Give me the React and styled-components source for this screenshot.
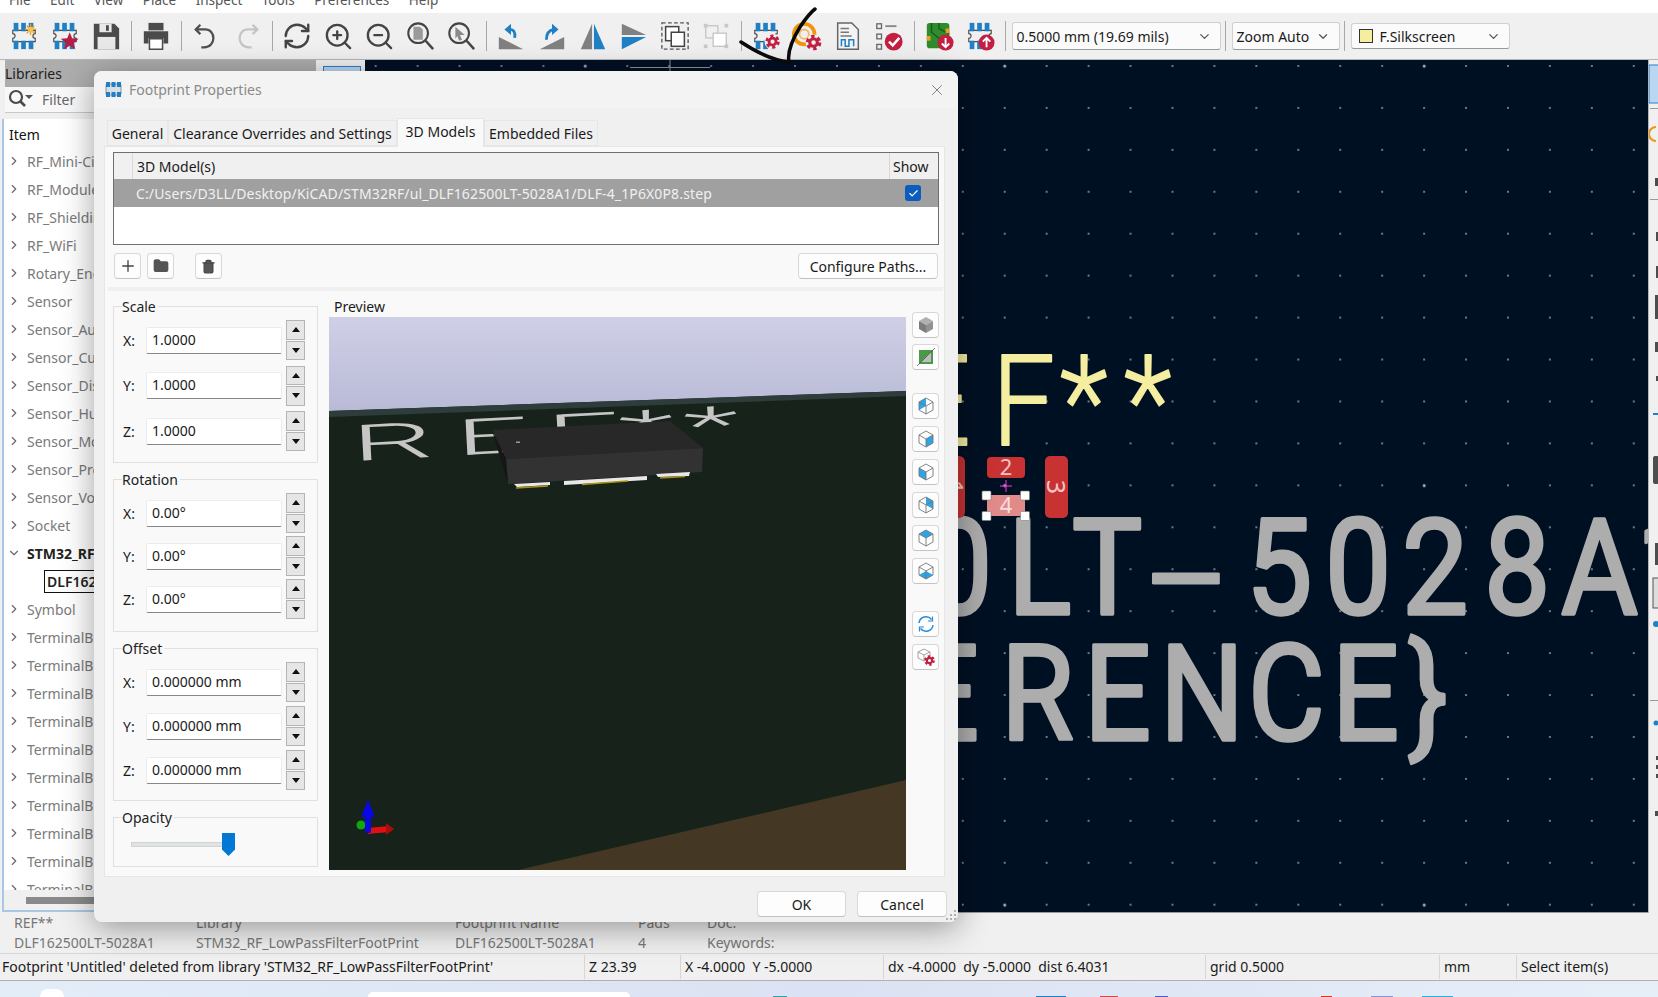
import React from 'react';
import styled, { createGlobalStyle } from 'styled-components';
import { ZoomIn, ZoomOut, RefreshCw, ChevronRight, ChevronDown, Plus, Folder, Trash2, Check, X } from 'lucide-react';

const GlobalStyle = createGlobalStyle`
    html, body {
        margin: 0;
        padding: 0;
        overflow: hidden;
        background: #f0f0f0;
    }
    * {
        box-sizing: border-box;
    }
`;

const UI_FONT = `"Noto Sans", "Open Sans", "Liberation Sans", sans-serif`;

const Page = styled.div`
    position: relative;
    width: 1658px;
    height: 997px;
    overflow: hidden;
    display: flex;
    flex-direction: column;
    background: #f0f0f0;
    font-family: ${UI_FONT};
    font-size: 14px;
    color: #1a1a1a;
`;

/* ---------- menu + top toolbar ---------- */

const MenuBar = styled.div`
    height: 13px;
    flex: none;
    background: #ffffff;
    overflow: hidden;
    display: flex;
    padding-left: 9px;
    gap: 19.5px;
`;

const MenuItem = styled.span`
    margin-top: -10px;
    line-height: 20px;
    font-size: 13.5px;
    color: #555;
`;

const Toolbar = styled.div`
    height: 47px;
    flex: none;
    display: flex;
    align-items: center;
    padding-left: 3.5px;
    background: #f0f0f0;
    border-bottom: 1px solid #b5b5b5;
`;

const ToolButton = styled.div`
    width: 41px;
    height: 34px;
    flex: none;
    display: flex;
    align-items: center;
    justify-content: center;
`;

const ToolSep = styled.div`
    width: 1px;
    height: 30px;
    flex: none;
    margin: 0 4px;
    background: #a8a8a8;
`;

const Combo = styled.div`
    width: ${(p) => p.$w}px;
    height: ${(p) => p.$h || 28}px;
    flex: none;
    margin-left: 2px;
    padding: 0 8px 0 4px;
    display: flex;
    align-items: center;
    gap: 7px;
    background: #fbfbfb;
    border: 1px solid #d0d0d0;
    border-bottom-color: #9a9a9a;
    border-radius: 3px;
    font-size: 14px;
    white-space: nowrap;
    & > svg {
        margin-left: auto;
        color: #555;
    }
`;

const Swatch = styled.span`
    width: 14px;
    height: 14px;
    margin-left: 3px;
    flex: none;
    background: #f5eda0;
    border: 1px solid #333;
`;

/* ---------- main area ---------- */

const Main = styled.div`
    height: 853px;
    flex: none;
    display: flex;
`;

const LeftPanel = styled.div`
    width: 316px;
    flex: none;
    display: flex;
    flex-direction: column;
    padding-left: 2px;
    overflow: hidden;
`;

const PanelHeader = styled.div`
    height: 27px;
    flex: none;
    margin-left: 3px;
    padding-left: 0;
    display: flex;
    align-items: center;
    background: #adadad;
    color: #1e1e1e;
`;

const FilterRow = styled.div`
    height: 26px;
    flex: none;
    margin-left: 3px;
    padding-left: 1px;
    display: flex;
    align-items: center;
    gap: 8px;
    background: #f8f8f8;
    border-bottom: 1px solid #c8c8c8;
    color: #666;
`;

const Tree = styled.div`
    height: 771px;
    flex: none;
    margin-top: 6px;
    background: #ffffff;
    border-left: 2px solid #a9c6e4;
    overflow: hidden;
`;

const TreeHead = styled.div`
    height: 28px;
    padding: 3px 0 0 5px;
    display: flex;
    align-items: center;
    color: #111;
`;

const TreeRow = styled.div`
    height: 28px;
    display: flex;
    align-items: center;
    padding-left: ${(p) => (p.$child ? 40 : 3)}px;
    gap: 6px;
    white-space: nowrap;
    color: ${(p) => (p.$bold || p.$child ? '#222' : '#7a7a7a')};
    font-weight: ${(p) => (p.$bold ? 700 : 400)};
    & > svg {
        flex: none;
        color: #6a6a6a;
    }
`;

const TreeSelected = styled.span`
    border: 1px solid #111;
    padding: 0 60px 0 2px;
    line-height: 21px;
    font-weight: 600;
`;

const HScroll = styled.div`
    height: 22px;
    flex: none;
    display: flex;
    align-items: center;
    padding-left: 22px;
    border-left: 2px solid #a9c6e4;
    border-bottom: 2px solid #a9c6e4;
`;

const HThumb = styled.div`
    width: 200px;
    height: 7px;
    background: #8a8a8a;
`;

const LeftTools = styled.div`
    width: 49px;
    flex: none;
    padding: 6px 4px 0 7px;
`;

const ToolSelected = styled.div`
    width: 38px;
    height: 38px;
    background: #b9d6f2;
    border: 1px solid #2b7fd0;
`;

const Canvas = styled.div`
    position: relative;
    width: 1283px;
    flex: none;
    overflow: hidden;
    background-color: #001023;
    background-image:
        radial-gradient(circle, #a7aeb6 0 1.3px, transparent 1.7px),
        radial-gradient(circle, #939ca6 0 0.6px, transparent 1px);
    background-size: 419.5px 419.5px, 41.95px 41.95px;
    background-position: 430px 216px, -10.3px -15px;
    border-bottom: 1px solid #9a9a9a;
`;

const CanvasArt = styled.svg`
    position: absolute;
    left: 0;
    top: 0;
    width: 1283px;
    height: 853px;
`;

const RightTools = styled.div`
    flex: 1;
    min-width: 0;
    overflow: hidden;
    border-left: 1px solid #b5b5b5;
`;

/* ---------- bottom panels ---------- */

const MsgPanel = styled.div`
    height: 40px;
    flex: none;
    display: flex;
    padding-left: 14px;
    color: #777;
`;

const MsgCol = styled.div`
    width: ${(p) => p.$w}px;
    flex: none;
    line-height: 20px;
    white-space: nowrap;
`;

const StatusBar = styled.div`
    height: 28px;
    flex: none;
    display: flex;
    align-items: center;
    border-top: 1px solid #d6d6d6;
    border-bottom: 1px solid #b0b0b0;
    white-space: nowrap;
`;

const StatusCell = styled.div`
    width: ${(p) => p.$w}px;
    flex: none;
    height: 24px;
    line-height: 24px;
    padding-left: ${(p) => p.$pl || 4}px;
    overflow: hidden;
    border-right: 1px solid #d6d6d6;
    &:last-child {
        border-right: 0;
    }
`;

const Taskbar = styled.div`
    flex: 1;
    display: flex;
    align-items: flex-end;
    overflow: hidden;
    background: linear-gradient(90deg, #e3edf8, #dbe2f3 50%, #e6eff8);
`;

const TaskPiece = styled.div`
    width: ${(p) => p.$w}px;
    height: ${(p) => p.$h}px;
    margin-left: ${(p) => p.$ml}px;
    flex: none;
    background: ${(p) => p.$c};
    border-radius: ${(p) => p.$r || 0}px ${(p) => p.$r || 0}px 0 0;
`;

/* ---------- dialog ---------- */

const Dialog = styled.div`
    position: absolute;
    left: 94px;
    top: 71px;
    width: 864px;
    height: 851px;
    display: flex;
    flex-direction: column;
    border-radius: 8px;
    overflow: hidden;
    background: #f0f0f0;
    box-shadow: 0 6px 32px rgba(0, 0, 0, 0.38);
`;

const TitleBar = styled.div`
    height: 37px;
    flex: none;
    display: flex;
    align-items: center;
    gap: 7px;
    padding: 0 12px 0 11px;
    background: #f3f3f3;
    color: #8a8a8a;
    & > svg:last-child {
        margin-left: auto;
        color: #808080;
    }
`;

const DialogBody = styled.div`
    flex: 1;
    min-height: 0;
    display: flex;
    flex-direction: column;
    padding: 10px 13px 0 10px;
`;

const TabRow = styled.div`
    height: 28px;
    flex: none;
    display: flex;
    align-items: flex-end;
    padding-left: 3px;
`;

const Tab = styled.div`
    width: ${(p) => p.$w}px;
    height: ${(p) => (p.$active ? 29 : 26)}px;
    margin-bottom: ${(p) => (p.$active ? -1 : 0)}px;
    padding-bottom: ${(p) => (p.$active ? 3 : 0)}px;
    position: relative;
    flex: none;
    display: flex;
    align-items: center;
    justify-content: center;
    white-space: nowrap;
    background: ${(p) => (p.$active ? '#f9f9f9' : '#f0f0f0')};
    border: 1px solid #e6e6e6;
    border-bottom: ${(p) => (p.$active ? 0 : '1px solid #e6e6e6')};
`;

const TabPanel = styled.div`
    height: 731px;
    flex: none;
    display: flex;
    flex-direction: column;
    padding: 5px 5px 0 8px;
    background: #f9f9f9;
    border: 1px solid #e6e6e6;
`;

const Grid = styled.div`
    height: 93px;
    flex: none;
    background: #ffffff;
    border: 1px solid #6e6e6e;
`;

const GridHead = styled.div`
    height: 26px;
    display: flex;
    background: #f0f0f0;
`;

const GridCorner = styled.div`
    width: 19px;
    flex: none;
    border-right: 1px solid #d8d8d8;
`;

const GridTitle = styled.div`
    flex: 1;
    padding-left: 4px;
    line-height: 27px;
`;

const GridShow = styled.div`
    width: 49px;
    flex: none;
    padding-left: 3px;
    line-height: 27px;
    border-left: 1px solid #d8d8d8;
`;

const GridRow = styled.div`
    height: 28px;
    display: flex;
    align-items: center;
    background: #a0a0a0;
    color: #f0f0f0;
`;

const GridPath = styled.div`
    flex: 1;
    padding-left: 22px;
    white-space: nowrap;
    letter-spacing: 0.13px;
`;

const CheckBox = styled.div`
    width: 16px;
    height: 16px;
    margin-right: 17px;
    display: flex;
    align-items: center;
    justify-content: center;
    border-radius: 3px;
    background: #0b5cbd;
    color: #fff;
`;

const GridTools = styled.div`
    height: 26px;
    flex: none;
    margin-top: 8px;
    display: flex;
    align-items: center;
    justify-content: space-between;
    padding-left: 1px;
`;

const GridToolSet = styled.div`
    display: flex;
    align-items: center;
`;

const IconButton = styled.div`
    width: 27px;
    height: 26px;
    flex: none;
    margin-left: ${(p) => p.$ml || 0}px;
    margin-top: ${(p) => p.$mt || 0}px;
    display: flex;
    align-items: center;
    justify-content: center;
    background: #fdfdfd;
    border: 1px solid #d8d8d8;
    border-bottom-color: #c4c4c4;
    border-radius: 4px;
    color: #444;
`;

const Button = styled.div`
    width: ${(p) => p.$w}px;
    height: ${(p) => p.$h || 26}px;
    flex: none;
    margin-left: ${(p) => p.$ml || 0}px;
    margin-right: ${(p) => p.$mr || 0}px;
    display: flex;
    align-items: center;
    justify-content: center;
    background: #fdfdfd;
    border: 1px solid #d8d8d8;
    border-bottom-color: #c0c0c0;
    border-radius: 4px;
    white-space: nowrap;
`;

const SplitLine = styled.div`
    height: 4px;
    flex: none;
    margin: 8px -4px 0 -5px;
    background: #f0f0f0;
`;

const Columns = styled.div`
    flex: 1;
    min-height: 0;
    margin-top: 7px;
    display: flex;
`;

const FormCol = styled.div`
    width: 205px;
    flex: none;
    padding-top: 8px;
    display: flex;
    flex-direction: column;
    gap: 16px;
`;

const Group = styled.div`
    height: ${(p) => p.$h}px;
    flex: none;
    padding: 0 12px 0 9px;
    border: 1px solid #e0e0e0;
`;

const GroupTitle = styled.div`
    width: fit-content;
    height: 13px;
    margin: -10px 0 0 -1px;
    padding: 0 2px 0 0;
    line-height: 19px;
    background: linear-gradient(transparent 9px, #f9f9f9 9px);
    color: #222;
`;

const GroupRows = styled.div`
    padding-top: 10px;
    display: flex;
    flex-direction: column;
    gap: ${(p) => p.$gap}px;
`;

const Row = styled.div`
    height: 40px;
    display: flex;
    align-items: center;
`;

const RowLabel = styled.div`
    width: 23px;
    flex: none;
`;

const TextInput = styled.div`
    width: 136px;
    height: 27px;
    flex: none;
    padding-left: 5px;
    line-height: 24px;
    background: #ffffff;
    border: 1px solid #ececec;
    border-bottom: 1px solid #888;
    border-radius: 2px;
`;

const Spinner = styled.div`
    width: 19px;
    height: 40px;
    margin-left: 4px;
    flex: none;
    display: flex;
    flex-direction: column;
    gap: 1px;
`;

const SpinButton = styled.div`
    flex: 1;
    display: flex;
    align-items: center;
    justify-content: center;
    background: #e6e6e6;
    border: 1px solid #b4b4b4;
`;

const Arrow = styled.span`
    width: 0;
    height: 0;
    border-left: 4px solid transparent;
    border-right: 4px solid transparent;
    ${(p) => (p.$up ? 'border-bottom: 5px solid #111;' : 'border-top: 5px solid #111;')}
`;

const SliderWrap = styled.div`
    position: relative;
    height: 30px;
    margin: 12px 0 0 8px;
`;

const SliderTrack = styled.div`
    width: 104px;
    height: 5px;
    margin-top: 9px;
    position: absolute;
    background: #e0e3e3;
    border: 1px solid #d2d4d4;
`;

const SliderThumb = styled.div`
    position: absolute;
    left: 91px;
    top: 0;
    width: 13px;
    height: 23px;
    background: #0078d4;
    clip-path: polygon(0 0, 100% 0, 100% 72%, 50% 100%, 0 72%);
`;

const PreviewCol = styled.div`
    width: 577px;
    flex: none;
    margin-left: 11px;
    display: flex;
    flex-direction: column;
`;

const PreviewLabel = styled.div`
    height: 19px;
    flex: none;
    padding-left: 5px;
    line-height: 18px;
`;

const PreviewArt = styled.svg`
    display: block;
    width: 577px;
    height: 553px;
    flex: none;
`;

const PreviewTools = styled.div`
    flex: none;
    margin-left: 6px;
    padding-top: 14px;
    display: flex;
    flex-direction: column;
`;

const DialogFooter = styled.div`
    flex: 1;
    position: relative;
    display: flex;
    align-items: flex-start;
    justify-content: flex-end;
    padding-top: 14px;
`;

const Grip = styled.svg`
    position: absolute;
    right: -13px;
    bottom: 0;
    width: 12px;
    height: 12px;
`;

const Scribble = styled.svg`
    position: absolute;
    left: 730px;
    top: 0;
    width: 100px;
    height: 70px;
    pointer-events: none;
`;

/* ---------- drawn icons ---------- */

const Svg = ({ size = 30, vb = 32, children }) => (
    <svg width={size} height={size} viewBox={`0 0 ${vb} ${vb}`}>{children}</svg>
);

const Gear = ({ x, y, r = 6, c = '#c21f43' }) => (
    <g>
        <circle cx={x} cy={y} r={r} fill="none" stroke={c} strokeWidth={r * 0.55} strokeDasharray={`${r * 0.55} ${r * 0.5}`} />
        <circle cx={x} cy={y} r={r * 0.62} fill="none" stroke={c} strokeWidth={r * 0.5} />
    </g>
);

const FootprintArt = () => (
    <g>
        <path d="M4 10H28V13.5A2.5 2.5 0 0 0 28 18.5V22H4V18.5A2.5 2.5 0 0 0 4 13.5Z" fill="none" stroke="#4a4a4a" strokeWidth="1.2" />
        <g fill="#1f80c6">
            <rect x="5" y="2" width="5" height="9" />
            <rect x="13" y="2" width="5" height="9" />
            <rect x="21" y="2" width="5" height="9" />
            <rect x="5" y="21" width="5" height="9" />
            <rect x="13" y="21" width="5" height="9" />
            <rect x="21" y="21" width="5" height="9" />
        </g>
    </g>
);

const ArrowBadge = ({ up }) => (
    <g>
        <circle cx="23" cy="23" r="8.5" fill="#c21f43" />
        <path d={up ? 'M23 28V18M19 22L23 18L27 22' : 'M23 18V28M19 24L23 28L27 24'} stroke="#fff" strokeWidth="2" fill="none" />
    </g>
);

const icons = {
    fpSun: (
        <Svg>
            <FootprintArt />
            <g stroke="#f0a020" strokeWidth="1.4">
                <path d="M23 3V15M17 9H29M19 5L27 13M27 5L19 13" />
            </g>
            <circle cx="23" cy="9" r="3" fill="#f8c050" />
        </Svg>
    ),
    fpStar: (
        <Svg>
            <FootprintArt />
            <path d="M21 12L23.6 18.5L30.5 19L25.2 23.4L27 30.2L21 26.5L15 30.2L16.8 23.4L11.5 19L18.4 18.5Z" fill="#b51d42" />
        </Svg>
    ),
    save: (
        <Svg>
            <path d="M3 3H25L30 8V30H3Z" fill="#4b4b4b" />
            <rect x="9" y="3" width="13" height="9" fill="#e8e8e8" />
            <rect x="16" y="4.5" width="3" height="6" fill="#4b4b4b" />
            <rect x="7" y="17" width="19" height="13" fill="#e8e8e8" />
        </Svg>
    ),
    print: (
        <Svg>
            <rect x="8" y="2" width="16" height="8" fill="#4b4b4b" />
            <path d="M3 11H29V24H24V18H8V24H3Z" fill="#4b4b4b" />
            <path d="M9 19H23V30H9Z" fill="#fff" stroke="#4b4b4b" strokeWidth="1.6" />
        </Svg>
    ),
    undo: (
        <Svg>
            <path d="M10 4L5 9L10 14M5 9H15C27 9 27 28 14 28H11" fill="none" stroke="#4f4f4f" strokeWidth="2.4" />
        </Svg>
    ),
    redo: (
        <Svg>
            <path d="M22 4L27 9L22 14M27 9H17C5 9 5 28 18 28H21" fill="none" stroke="#c4c4c4" strokeWidth="2.4" />
        </Svg>
    ),
    refresh: <RefreshCw size={30} color="#444" strokeWidth={1.9} />,
    zoomIn: <ZoomIn size={31} color="#444" strokeWidth={1.8} />,
    zoomOut: <ZoomOut size={31} color="#444" strokeWidth={1.8} />,
    zoomFit: (
        <Svg>
            <circle cx="14" cy="13" r="10.5" fill="none" stroke="#444" strokeWidth="2.2" />
            <path d="M22 21L30 30" stroke="#444" strokeWidth="2.6" />
            <path d="M9 6H16L19 9V20H9Z" fill="#9a9a9a" />
        </Svg>
    ),
    zoomObj: (
        <Svg>
            <circle cx="14" cy="13" r="10.5" fill="none" stroke="#444" strokeWidth="2.2" />
            <path d="M22 21L30 30" stroke="#444" strokeWidth="2.6" />
            <path d="M10 6L20 15H15L17 20L14 21L12 16L10 19Z" fill="#8a8a8a" />
        </Svg>
    ),
    rotL: (
        <Svg>
            <path d="M3 30L29 30V17Z" transform="scale(-1 1) translate(-32 0)" fill="#808080" />
            <path d="M20 18C21 12 19 9 14 9" fill="none" stroke="#1f80c6" strokeWidth="3" />
            <path d="M16 3L9 9L16 15Z" fill="#1f80c6" />
        </Svg>
    ),
    rotR: (
        <Svg>
            <path d="M3 30L29 30V17Z" fill="#808080" />
            <path d="M10 20C10 14 12 10 18 9" fill="none" stroke="#1f80c6" strokeWidth="3" />
            <path d="M16 3L23 9L16 15Z" fill="#1f80c6" />
        </Svg>
    ),
    mirH: (
        <Svg>
            <path d="M15 3V30H3Z" fill="#808080" />
            <path d="M17 3V30H29Z" fill="#1f80c6" />
        </Svg>
    ),
    mirV: (
        <Svg>
            <path d="M3 3L29 15H3Z" fill="#808080" />
            <path d="M3 17L29 17L3 30Z" fill="#1f80c6" />
        </Svg>
    ),
    group: (
        <Svg>
            <rect x="2" y="2" width="28" height="28" fill="none" stroke="#555" strokeWidth="1.4" strokeDasharray="4 2.5" />
            <rect x="6" y="6" width="14" height="15" fill="#fff" stroke="#444" strokeWidth="1.6" />
            <rect x="12" y="12" width="14" height="15" fill="#fff" stroke="#444" strokeWidth="1.6" />
        </Svg>
    ),
    ungroup: (
        <Svg>
            <rect x="5" y="5" width="13" height="13" fill="none" stroke="#c8c8c8" strokeWidth="1.5" />
            <rect x="13" y="13" width="14" height="14" fill="#fff" stroke="#c8c8c8" strokeWidth="1.5" />
            <rect x="3" y="3" width="4" height="4" fill="#c8c8c8" />
            <rect x="25" y="3" width="4" height="4" fill="#c8c8c8" />
            <rect x="3" y="25" width="4" height="4" fill="#c8c8c8" />
            <rect x="25" y="25" width="4" height="4" fill="#c8c8c8" />
        </Svg>
    ),
    fpGear: (
        <Svg>
            <FootprintArt />
            <circle cx="23" cy="22" r="8.5" fill="#f0f0f0" />
            <Gear x={23} y={22} r={6} />
        </Svg>
    ),
    ringGear: (
        <Svg>
            <circle cx="13" cy="14" r="11" fill="none" stroke="#f0960e" strokeWidth="4" />
            <circle cx="13" cy="14" r="5" fill="none" stroke="#f5b860" strokeWidth="2" />
            <circle cx="23" cy="23" r="8.5" fill="#f0f0f0" />
            <Gear x={23} y={23} r={6.5} />
        </Svg>
    ),
    sheet: (
        <Svg>
            <path d="M5 2H20L27 9V30H5Z" fill="#f4f4f4" stroke="#666" strokeWidth="1.6" />
            <path d="M8 8H17M8 12H17M8 16H20" stroke="#777" strokeWidth="1.4" />
            <path d="M9 27V20H13V27H17V20H22V27" fill="none" stroke="#1f80c6" strokeWidth="1.6" />
        </Svg>
    ),
    checks: (
        <Svg>
            <g fill="none" stroke="#666" strokeWidth="1.4">
                <rect x="3" y="3" width="5" height="5" />
                <rect x="3" y="14" width="5" height="5" />
                <rect x="3" y="25" width="5" height="5" />
            </g>
            <path d="M12 5.5H24" stroke="#888" strokeWidth="2" />
            <circle cx="21" cy="22" r="9.5" fill="#c21f43" />
            <path d="M16 22L20 26L27 18" fill="none" stroke="#fff" strokeWidth="2.6" />
        </Svg>
    ),
    pcbDown: (
        <Svg>
            <rect x="3" y="2" width="24" height="27" rx="3" fill="#2e8b2e" />
            <path d="M8 2V12L18 20M16 2V8L27 14" fill="none" stroke="#185c18" strokeWidth="1.5" />
            <rect x="23" y="8" width="4" height="5" fill="#e8a020" />
            <rect x="3" y="16" width="4" height="5" fill="#e8a020" />
            <ArrowBadge />
        </Svg>
    ),
    fpUp: (
        <Svg>
            <FootprintArt />
            <ArrowBadge up />
        </Svg>
    ),
};

const Cube = ({ face }) => {
    const faces = {
        a: '3,6 10,2 10,10 3,14',
        b: '10,10 17,6 17,14 10,18',
        c: '3,6 10,10 10,18 3,14',
        d: '10,2 17,6 17,14 10,10',
        e: '3,6 10,2 17,6 10,10',
        f: '3,14 10,10 17,14 10,18',
    };
    return (
        <Svg size={20} vb={20}>
            <polygon points={faces[face]} fill="#2ba4e8" />
            <path d="M10 2L17 6V14L10 18L3 14V6ZM3 6L10 10L17 6M10 10V18" fill="none" stroke="#777" strokeWidth="0.9" />
        </Svg>
    );
};

const SolidCube = () => (
    <Svg size={20} vb={20}>
        <polygon points="10,2 17,6 10,10 3,6" fill="#b0b0b0" />
        <polygon points="3,6 10,10 10,18 3,14" fill="#7c7c7c" />
        <polygon points="17,6 10,10 10,18 17,14" fill="#929292" />
    </Svg>
);

const BoardIcon = () => (
    <Svg size={20} vb={20}>
        <rect x="3" y="3" width="14" height="14" fill="#4a9a4a" />
        <polygon points="5,15 15,5 15,15" fill="#bdbdbd" />
        <path d="M1 19L19 1" stroke="#555" strokeWidth="0.8" />
    </Svg>
);

const ReloadIcon = () => (
    <Svg size={20} vb={20}>
        <path d="M3 9A7 7 0 0 1 15.5 5.5M17 11A7 7 0 0 1 4.5 14.5" fill="none" stroke="#2a8ad6" strokeWidth="1.5" />
        <path d="M16.5 2.5V7H12M3.5 17.5V13H8" fill="none" stroke="#2a8ad6" strokeWidth="1.2" />
    </Svg>
);

const SettingsCube = () => (
    <Svg size={20} vb={20}>
        <path d="M8 2L14 5V11L8 14L2 11V5ZM2 5L8 8L14 5M8 8V14" fill="none" stroke="#999" strokeWidth="0.9" />
        <Gear x={13.5} y={13.5} r={4.2} />
    </Svg>
);

const FootprintTitleIcon = () => (
    <Svg size={17} vb={17}>
        <rect x="1" y="3" width="15" height="11" rx="1" fill="#d6dfe6" stroke="#555" strokeWidth="0.6" />
        <g fill="#1f80c6">
            <rect x="1" y="1" width="4" height="5" />
            <rect x="6.5" y="1" width="4" height="5" />
            <rect x="12" y="1" width="4" height="5" />
            <rect x="1" y="11" width="4" height="5" />
            <rect x="6.5" y="11" width="4" height="5" />
            <rect x="12" y="11" width="4" height="5" />
        </g>
    </Svg>
);

const SearchIcon = () => (
    <Svg size={28} vb={28}>
        <circle cx="10" cy="11" r="6" fill="none" stroke="#4a4a4a" strokeWidth="2.2" />
        <path d="M14.5 15.5L19 20" stroke="#4a4a4a" strokeWidth="2.6" />
        <path d="M19 9H27L23 13Z" fill="#555" />
    </Svg>
);

/* ---------- page data ---------- */

const toolbarGroups = [
    ['fpSun', 'fpStar', 'save'],
    ['print'],
    ['undo', 'redo'],
    ['refresh', 'zoomIn', 'zoomOut', 'zoomFit', 'zoomObj'],
    ['rotL', 'rotR', 'mirH', 'mirV', 'group', 'ungroup'],
    ['fpGear', 'ringGear', 'sheet', 'checks'],
    ['pcbDown', 'fpUp'],
];

const libraries = [
    'RF_Mini-Circuits', 'RF_Module', 'RF_Shielding', 'RF_WiFi', 'Rotary_Encoder', 'Sensor', 'Sensor_Audio',
    'Sensor_Current', 'Sensor_Distance', 'Sensor_Humidity', 'Sensor_Motion', 'Sensor_Pressure', 'Sensor_Voltage', 'Socket',
];

const afterLibraries = ['Symbol', ...Array(9).fill('TerminalBlock'), 'TerminalBlock_Phoenix', 'TerminalBlock_RND'];

const spinGroups = [
    { title: 'Scale', h: 157, gap: 5.5, rows: [['X:', '1.0000'], ['Y:', '1.0000'], ['Z:', '1.0000']] },
    { title: 'Rotation', h: 153, gap: 3, rows: [['X:', '0.00°'], ['Y:', '0.00°'], ['Z:', '0.00°']] },
    { title: 'Offset', h: 153, gap: 4, rows: [['X:', '0.000000 mm'], ['Y:', '0.000000 mm'], ['Z:', '0.000000 mm']] },
];

const SILK = 'Roboto, "Liberation Sans", sans-serif';
const xs = (...v) => v.join(' ');

// silkscreen lettering is narrower than Roboto, so it sits in a condensed group
const NARROW = 0.88;
const nx = (...v) => v.map((n) => (n / NARROW).toFixed(1)).join(' ');

const silkGrey = {
    fontFamily: SILK,
    fontSize: 134,
    fill: '#adadad',
    stroke: '#adadad',
    strokeWidth: 3.5,
    strokeLinejoin: 'round',
};

// canvas drawing uses page coordinates, shifted by the canvas origin
const PcbDrawing = () => (
    <CanvasArt viewBox="365 60 1283 853">
        <path d="M630 67.5H710M670 60V72" stroke="#8a939c" strokeWidth="1" />
        <g transform={`scale(${NARROW} 1)`}>
            <text x={nx(820, 907, 992, 1060, 1124)} y="445" fontFamily={SILK} fontSize="127" fontWeight="300" fill="#f5eda0" stroke="#f5eda0" strokeWidth="1.8" strokeLinejoin="round">REF**</text>
            <text x={nx(225, 305, 385, 465, 545, 625, 705, 785, 926, 1008, 1072)} y="614" {...silkGrey}>DLF162500LT</text>
            <text x={nx(1246, 1325, 1402, 1484, 1561, 1636)} y="614" {...silkGrey}>5028A1</text>
            <text x={nx(380, 460, 560, 660, 760, 912, 1001, 1084, 1160, 1248, 1332, 1408)} y="740" {...silkGrey}>
                {'${REFERENCE}'}
            </text>
        </g>
        <text transform="translate(1149 619) scale(2 1)" {...silkGrey} strokeWidth="2">-</text>

        <rect x="920" y="456" width="45" height="62" rx="6" fill="#c83232" />
        <rect x="987" y="457" width="38" height="21" rx="4" fill="#c83232" />
        <rect x="1045" y="456" width="23" height="62" rx="5" fill="#c83232" />
        <rect x="987" y="495" width="38" height="21" fill="#e08a8a" />
        <text x="1006" y="475" textAnchor="middle" fontFamily={UI_FONT} fontSize="22" fill="#f3c4c4">2</text>
        <text x="1006" y="513" textAnchor="middle" fontFamily={UI_FONT} fontSize="22" fill="#f7dede">4</text>
        <text transform="translate(1047 487) rotate(90)" textAnchor="middle" fontFamily={UI_FONT} fontSize="25" fill="#f3c4c4">3</text>
        <text transform="translate(945 487) rotate(90)" textAnchor="middle" fontFamily={UI_FONT} fontSize="25" fill="#f3c4c4">1</text>
        <path d="M1000 486H1012M1006 480V492" stroke="#ff30e0" strokeWidth="1" />
        <g fill="#fff" stroke="#777" strokeWidth="0.6">
            <rect x="982" y="491" width="9" height="9" rx="1" />
            <rect x="1020.500" y="491" width="9" height="9" rx="1" />
            <rect x="982" y="511.500" width="9" height="9" rx="1" />
            <rect x="1020.500" y="511.500" width="9" height="9" rx="1" />
        </g>
    </CanvasArt>
);

// 3D viewer content, in page coordinates too
const ModelPreview = () => (
    <PreviewArt viewBox="329 317 577 553">
        <defs>
            <linearGradient id="sky" x1="0" y1="0" x2="0" y2="1">
                <stop offset="0" stopColor="#cfcfe6" />
                <stop offset="1" stopColor="#b9bad6" />
            </linearGradient>
        </defs>
        <rect x="329" y="317" width="577" height="553" fill="#17231a" />
        <polygon points="329,317 906,317 906,391 329,411" fill="url(#sky)" />
        <polygon points="329,411 906,391 906,396 329,417" fill="#2e3c3c" />
        <polygon points="518,870 906,780 906,870" fill="#443824" />
        <text
            transform="translate(352 461) rotate(-3) scale(2.6 1)"
            x={xs(0, 40, 75, 103, 128)}
            fontFamily={SILK}
            fontSize="50"
            fontWeight="300"
            fill="#c6c6c6"
        >
            REF**
        </text>
        <polygon points="492,430 670,421 703,448 506,459" fill="#282828" />
        <polygon points="506,459 703,448 702,472 508,484" fill="#323232" />
        <polygon points="492,430 506,459 508,484" fill="#161616" />
        <rect x="516" y="441.500" width="4" height="1.500" fill="#999" />
        <polygon points="514,484 550,482 550,485 517,487" fill="#e8e8e8" />
        <polygon points="564,481 647,476 647,480 564,485" fill="#e8e8e8" />
        <polygon points="656,474 690,472 689,476 658,477" fill="#e8e8e8" />
        <path d="M516 488L548 486M582 484.500L628 481M660 478L685 476.500" stroke="#a89015" strokeWidth="1.400" />
        <circle cx="361" cy="825" r="4.500" fill="#0ea80e" />
        <polygon points="368,828 389,826 394,829 389,832 368,834" fill="#e01010" />
        <polygon points="386,823 394,829 386,835" fill="#a80c0c" />
        <rect x="365" y="813" width="6" height="20" rx="2" fill="#0808e0" />
        <polygon points="368,800 375,817 361,817" fill="#0808e0" />
    </PreviewArt>
);

const Spin = () => (
    <Spinner>
        <SpinButton><Arrow $up /></SpinButton>
        <SpinButton><Arrow /></SpinButton>
    </Spinner>
);

const App = () => (
    <Page>
        <GlobalStyle />
        <MenuBar>
            {['File', 'Edit', 'View', 'Place', 'Inspect', 'Tools', 'Preferences', 'Help'].map((m) => (
                <MenuItem key={m}>{m}</MenuItem>
            ))}
        </MenuBar>
        <Toolbar>
            {toolbarGroups.map((group, i) => (
                <React.Fragment key={i}>
                    {i > 0 && <ToolSep />}
                    {group.map((name) => (
                        <ToolButton key={name}>{icons[name]}</ToolButton>
                    ))}
                </React.Fragment>
            ))}
            <ToolSep />
            <Combo $w={209}>0.5000 mm (19.69 mils)<ChevronDown size={15} /></Combo>
            <ToolSep />
            <Combo $w={108}>Zoom Auto<ChevronDown size={15} /></Combo>
            <ToolSep />
            <Combo $w={159} $h={26}><Swatch />F.Silkscreen<ChevronDown size={15} /></Combo>
        </Toolbar>

        <Main>
            <LeftPanel>
                <PanelHeader>Libraries</PanelHeader>
                <FilterRow><SearchIcon />Filter</FilterRow>
                <Tree>
                    <TreeHead>Item</TreeHead>
                    {libraries.map((name) => (
                        <TreeRow key={name}><ChevronRight size={14} />{name}</TreeRow>
                    ))}
                    <TreeRow $bold><ChevronDown size={14} />STM32_RF_LowPassFilterFootPrint</TreeRow>
                    <TreeRow $child><TreeSelected>DLF162500LT-5028A1</TreeSelected></TreeRow>
                    {afterLibraries.map((name, i) => (
                        <TreeRow key={i}><ChevronRight size={14} />{name}</TreeRow>
                    ))}
                </Tree>
                <HScroll><HThumb /></HScroll>
            </LeftPanel>
            <LeftTools><ToolSelected /></LeftTools>
            <Canvas><PcbDrawing /></Canvas>
            <RightTools>
                <svg width="10" height="853" viewBox="1649 60 10 853">
                    <rect x="1649" y="65" width="10" height="38" fill="#b9d6f2" stroke="#2b7fd0" />
                    <path d="M1650 108.500H1659M1650 199.500H1659M1650 700.500H1659" stroke="#999" />
                    <path d="M1656 127A7 7 0 0 0 1656 141" fill="none" stroke="#f0960e" strokeWidth="2" />
                    <g fill="#4d4d4d">
                        <rect x="1655" y="178" width="4" height="8" />
                        <rect x="1656" y="232" width="3" height="9" />
                        <rect x="1656" y="266" width="3" height="12" />
                        <rect x="1655" y="295" width="4" height="24" />
                        <rect x="1655" y="342" width="4" height="10" />
                        <rect x="1656" y="376" width="3" height="5" />
                        <rect x="1653" y="456" width="6" height="28" rx="2" />
                        <rect x="1655" y="543" width="4" height="22" />
                        <rect x="1656" y="765" width="3" height="4" />
                        <rect x="1656" y="756" width="3" height="4" />
                        <rect x="1656" y="774" width="3" height="4" />
                        <rect x="1655" y="811" width="4" height="5" />
                    </g>
                    <rect x="1653" y="413" width="6" height="2" fill="#1f80c6" />
                    <rect x="1653" y="578" width="6" height="30" fill="#ddd" stroke="#555" />
                    <circle cx="1656" cy="624" r="3" fill="#1f80c6" />
                    <circle cx="1656" cy="723" r="2.500" fill="#1f80c6" />
                </svg>
            </RightTools>
        </Main>

        <MsgPanel>
            <MsgCol $w={182}><div>REF**</div><div>DLF162500LT-5028A1</div></MsgCol>
            <MsgCol $w={259}><div>Library</div><div>STM32_RF_LowPassFilterFootPrint</div></MsgCol>
            <MsgCol $w={183}><div>Footprint Name</div><div>DLF162500LT-5028A1</div></MsgCol>
            <MsgCol $w={69}><div>Pads</div><div>4</div></MsgCol>
            <MsgCol $w={200}><div>Doc:</div><div>Keywords:</div></MsgCol>
        </MsgPanel>
        <StatusBar>
            <StatusCell $w={585} $pl={2}>Footprint 'Untitled' deleted from library 'STM32_RF_LowPassFilterFootPrint'</StatusCell>
            <StatusCell $w={96}>Z 23.39</StatusCell>
            <StatusCell $w={203}>X -4.0000&nbsp; Y -5.0000</StatusCell>
            <StatusCell $w={322}>dx -4.0000&nbsp; dy -5.0000&nbsp; dist 6.4031</StatusCell>
            <StatusCell $w={234}>grid 0.5000</StatusCell>
            <StatusCell $w={77}>mm</StatusCell>
            <StatusCell $w={141}>Select item(s)</StatusCell>
        </StatusBar>
        <Taskbar>
            <TaskPiece $w={24} $h={8} $ml={40} $r={12} $c="#ffffff" />
            <TaskPiece $w={262} $h={5} $ml={304} $r={5} $c="#ffffff" />
            <TaskPiece $w={14} $h={1} $ml={143} $c="#2aa6a6" />
            <TaskPiece $w={30} $h={1} $ml={249} $c="#1f80c6" />
            <TaskPiece $w={18} $h={1} $ml={34} $c="#d04a4a" />
            <TaskPiece $w={13} $h={1} $ml={37} $c="#4a5ad0" />
            <TaskPiece $w={11} $h={1} $ml={153} $c="#e03020" />
            <TaskPiece $w={22} $h={1} $ml={39} $c="#8a94d8" />
            <TaskPiece $w={31} $h={1} $ml={29} $c="#2ab0e0" />
        </Taskbar>

        <Dialog>
            <TitleBar>
                <FootprintTitleIcon />
                Footprint Properties
                <X size={18} strokeWidth={1.3} />
            </TitleBar>
            <DialogBody>
                <TabRow>
                    <Tab $w={61}>General</Tab>
                    <Tab $w={229}>Clearance Overrides and Settings</Tab>
                    <Tab $w={87} $active>3D Models</Tab>
                    <Tab $w={114}>Embedded Files</Tab>
                </TabRow>
                <TabPanel>
                    <Grid>
                        <GridHead>
                            <GridCorner />
                            <GridTitle>3D Model(s)</GridTitle>
                            <GridShow>Show</GridShow>
                        </GridHead>
                        <GridRow>
                            <GridPath>C:/Users/D3LL/Desktop/KiCAD/STM32RF/ul_DLF162500LT-5028A1/DLF-4_1P6X0P8.step</GridPath>
                            <CheckBox><Check size={11} strokeWidth={2.5} /></CheckBox>
                        </GridRow>
                    </Grid>
                    <GridTools>
                        <GridToolSet>
                            <IconButton><Plus size={18} strokeWidth={1.8} /></IconButton>
                            <IconButton $ml={6}><Folder size={16} fill="#555" color="#555" /></IconButton>
                            <IconButton $ml={21}><Trash2 size={15} fill="#555" color="#444" /></IconButton>
                        </GridToolSet>
                        <Button $w={140} $mr={1}>Configure Paths...</Button>
                    </GridTools>
                    <SplitLine />
                    <Columns>
                        <FormCol>
                            {spinGroups.map((g) => (
                                <Group key={g.title} $h={g.h}>
                                    <GroupTitle>{g.title}</GroupTitle>
                                    <GroupRows $gap={g.gap}>
                                        {g.rows.map(([label, value]) => (
                                            <Row key={label}>
                                                <RowLabel>{label}</RowLabel>
                                                <TextInput>{value}</TextInput>
                                                <Spin />
                                            </Row>
                                        ))}
                                    </GroupRows>
                                </Group>
                            ))}
                            <Group $h={50}>
                                <GroupTitle>Opacity</GroupTitle>
                                <SliderWrap>
                                    <SliderTrack />
                                    <SliderThumb />
                                </SliderWrap>
                            </Group>
                        </FormCol>
                        <PreviewCol>
                            <PreviewLabel>Preview</PreviewLabel>
                            <ModelPreview />
                        </PreviewCol>
                        <PreviewTools>
                            <IconButton><SolidCube /></IconButton>
                            <IconButton $mt={6}><BoardIcon /></IconButton>
                            <IconButton $mt={23}><Cube face="a" /></IconButton>
                            <IconButton $mt={7}><Cube face="b" /></IconButton>
                            <IconButton $mt={7}><Cube face="c" /></IconButton>
                            <IconButton $mt={7}><Cube face="d" /></IconButton>
                            <IconButton $mt={7}><Cube face="e" /></IconButton>
                            <IconButton $mt={7}><Cube face="f" /></IconButton>
                            <IconButton $mt={27}><ReloadIcon /></IconButton>
                            <IconButton $mt={7}><SettingsCube /></IconButton>
                        </PreviewTools>
                    </Columns>
                </TabPanel>
                <DialogFooter>
                    <Button $w={89}>OK</Button>
                    <Button $w={90} $ml={11} $mr={-2}>Cancel</Button>
                    <Grip viewBox="0 0 12 12">
                        <g fill="#b0b0b0">
                            <rect x="8" y="0" width="2" height="2" />
                            <rect x="4" y="4" width="2" height="2" />
                            <rect x="8" y="4" width="2" height="2" />
                            <rect x="0" y="8" width="2" height="2" />
                            <rect x="4" y="8" width="2" height="2" />
                            <rect x="8" y="8" width="2" height="2" />
                        </g>
                    </Grip>
                </DialogFooter>
            </DialogBody>
        </Dialog>

        <Scribble viewBox="730 0 100 70">
            <path d="M741 42C750 48 770 60 789 62C787 52 792 40 800 27C806 18 811 12 815 9" fill="none" stroke="#0a0a0a" strokeWidth="3.5" strokeLinecap="round" strokeLinejoin="round" />
        </Scribble>
    </Page>
);

export default App;
